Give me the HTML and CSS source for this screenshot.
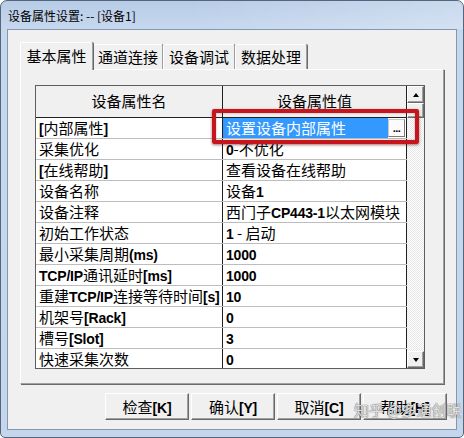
FILE: index.html
```html
<!DOCTYPE html>
<html>
<head>
<meta charset="utf-8">
<link rel="stylesheet" href="styles.css">
</head>
<body>
<div class="window">
  <div class="titlebar">设备属性设置: -- [设备1]</div>
  <div class="client">
    <div class="tabs">
      <div class="tab active w73">基本属性</div>
      <div class="tab w70">通道连接</div>
      <div class="tab w72">设备调试</div>
      <div class="tab w72">数据处理</div>
    </div>
    <div class="panel">
      <div class="grid">
        <div class="table">
          <div class="row head"><div class="c1">设备属性名</div><div class="c2">设备属性值</div></div>
          <div class="row"><div class="c1"><b>[</b>内部属性<b>]</b></div><div class="c2 sel"><span class="selval">设置设备内部属性</span><span class="dots">...</span></div></div>
          <div class="row"><div class="c1">采集优化</div><div class="c2"><b>0</b>-不优化</div></div>
          <div class="row"><div class="c1"><b>[</b>在线帮助<b>]</b></div><div class="c2">查看设备在线帮助</div></div>
          <div class="row"><div class="c1">设备名称</div><div class="c2">设备<b>1</b></div></div>
          <div class="row"><div class="c1">设备注释</div><div class="c2">西门子<b>CP443-1</b>以太网模块</div></div>
          <div class="row"><div class="c1">初始工作状态</div><div class="c2"><b>1</b> - 启动</div></div>
          <div class="row"><div class="c1">最小采集周期<b>(ms)</b></div><div class="c2"><b>1000</b></div></div>
          <div class="row"><div class="c1"><b>TCP/IP</b>通讯延时<b>[ms]</b></div><div class="c2"><b>1000</b></div></div>
          <div class="row"><div class="c1">重建<b>TCP/IP</b>连接等待时间<b>[s]</b></div><div class="c2"><b>10</b></div></div>
          <div class="row"><div class="c1">机架号<b>[Rack]</b></div><div class="c2"><b>0</b></div></div>
          <div class="row"><div class="c1">槽号<b>[Slot]</b></div><div class="c2"><b>3</b></div></div>
          <div class="row"><div class="c1">快速采集次数</div><div class="c2"><b>0</b></div></div>
        </div>
        <div class="scroll">
          <div class="sbtn"><span class="tri up"></span></div>
          <div class="thumb"></div>
          <div class="track"></div>
          <div class="sbtn"><span class="tri down"></span></div>
        </div>
      </div>
    </div>
    <div class="buttons">
      <div class="btn">检查<b>[K]</b></div>
      <div class="btn">确认<b>[Y]</b></div>
      <div class="btn">取消<b>[C]</b></div>
      <div class="btn">帮助<b>[H]</b></div>
    </div>
  </div>
  <div class="highlight"></div>
  <div class="watermark">知乎 @多通创联</div>
</div>
</body>
</html>
```
FILE: styles.css
```css
* { box-sizing: border-box; }
body {
  margin: 0;
  background: #fff;
  font-family: "Noto Sans CJK SC", sans-serif;
  color: #000;
}
b {
  font-family: "Liberation Sans", "Noto Sans CJK SC", sans-serif;
  font-weight: bold;
  font-size: 14px;
  letter-spacing: -0.2px;
}
.window {
  position: relative;
  width: 464px;
  height: 438px;
  background: linear-gradient(180deg, #b7cce7 0, #c6d8ee 28px, #c4d6ec 100%);
  border: 1px solid #56657a;
  border-radius: 7px 7px 5px 5px;
  overflow: hidden;
}
.titlebar {
  height: 28px;
  padding: 2px 0 0 7px;
  font-size: 12px;
  line-height: 26px;
  background: linear-gradient(90deg, rgba(255,255,255,0) 40%, rgba(255,255,255,0.25) 100%);
}
.client {
  margin: 0 6px;
  width: 450px;
  height: 401px;
  background: #f0f0f0;
  border: 1px solid #8397b3;
}
.tabs {
  display: flex;
  align-items: flex-end;
  height: 27px;
  margin: 12px 0 0 12px;
}
.tab {
  height: 25px;
  font-size: 15px;
  line-height: 23px;
  text-align: center;
  border-top: 1px solid #fff;
  border-left: 1px solid #fff;
  border-right: 1px solid #a0a0a0;
  box-shadow: 1px 0 0 #696969;
  border-radius: 2px 2px 0 0;
  background: #f0f0f0;
}
.tab.active {
  position: relative;
  z-index: 1;
  height: 28px;
  margin-bottom: -1px;
  line-height: 25px;
}
.w73 { width: 73px; }
.w70 { width: 70px; }
.w72 { width: 72px; }
.panel {
  margin-left: 12px;
  width: 424px;
  height: 315px;
  border-top: 1px solid #fff;
  border-left: 1px solid #fff;
  border-right: 1px solid #a0a0a0;
  border-bottom: 1px solid #a0a0a0;
  box-shadow: 1px 1px 0 #696969;
  padding: 15px 0 0 14px;
}
.grid {
  display: flex;
  width: 390px;
  height: 284px;
  border: 1px solid #5e5e5e;
  background: #fff;
}
.table {
  width: 371px;
  overflow: hidden;
}
.row {
  display: flex;
  height: 21px;
  border-bottom: 1px solid #bdbdbd;
  font-size: 15px;
  line-height: 20px;
  white-space: nowrap;
}
.row.head {
  height: 32px;
  background: #f0f0f0;
  border-bottom: 1px solid #202020;
  line-height: 30px;
}
.row.head .c1, .row.head .c2 {
  text-align: center;
  padding-left: 0;
}
.c1 {
  width: 187px;
  padding-left: 3px;
  border-right: 1px solid #202020;
  overflow: hidden;
}
.c2 {
  width: 184px;
  padding-left: 3px;
  border-right: 1px solid #202020;
  overflow: hidden;
}
.c2.sel {
  display: flex;
  padding-left: 0;
}
.selval {
  flex: 1;
  background: #3399ff;
  color: #fff;
  padding-left: 3px;
}
.dots {
  width: 17px;
  height: 18px;
  margin: 1px 1px 0 0;
  background: #fbfbfb;
  border: 1px solid #c8c8c8;
  border-right-color: #7a7a7a;
  border-bottom-color: #7a7a7a;
  font-family: "Liberation Sans", sans-serif;
  font-weight: bold;
  font-size: 11px;
  line-height: 16px;
  text-align: center;
  letter-spacing: -0.5px;
}
.scroll {
  width: 17px;
  display: flex;
  flex-direction: column;
  background-color: #fff;
  background-image: repeating-conic-gradient(#e6e6e6 0 25%, #fff 0 50%);
  background-size: 2px 2px;
}
.sbtn, .thumb {
  background: #f0f0f0;
  border: 1px solid;
  border-color: #fff #696969 #696969 #fff;
  box-shadow: inset -1px -1px 0 #a0a0a0;
}
.sbtn {
  height: 17px;
  display: flex;
  align-items: center;
  justify-content: center;
}
.thumb { height: 15px; }
.track { flex: 1; }
.tri {
  width: 0;
  height: 0;
  border-left: 3.5px solid transparent;
  border-right: 3.5px solid transparent;
}
.tri.up { border-bottom: 4px solid #000; }
.tri.down { border-top: 4px solid #000; }
.buttons {
  display: flex;
  justify-content: flex-end;
  gap: 2px;
  margin-top: 9px;
  padding-right: 9px;
}
.btn {
  width: 84px;
  height: 27px;
  background: #f0f0f0;
  border: 1px solid;
  border-color: #fff #696969 #696969 #fff;
  box-shadow: inset -1px -1px 0 #a0a0a0;
  font-size: 15px;
  line-height: 25px;
  text-align: center;
}
.highlight {
  position: absolute;
  left: 211px;
  top: 108px;
  width: 207px;
  height: 35px;
  border: 4px solid #c4161c;
  border-radius: 2px;
  box-shadow: 0 1px 3px rgba(90, 0, 0, 0.55), inset 0 0 2px rgba(90, 0, 0, 0.4);
}
.watermark {
  position: absolute;
  left: 353px;
  top: 400px;
  font-size: 15px;
  line-height: 18px;
  color: rgba(245, 245, 245, 0.85);
  text-shadow: 0 0 1px #6a6a6a, 0 0 1px #6a6a6a;
  white-space: nowrap;
}
```
